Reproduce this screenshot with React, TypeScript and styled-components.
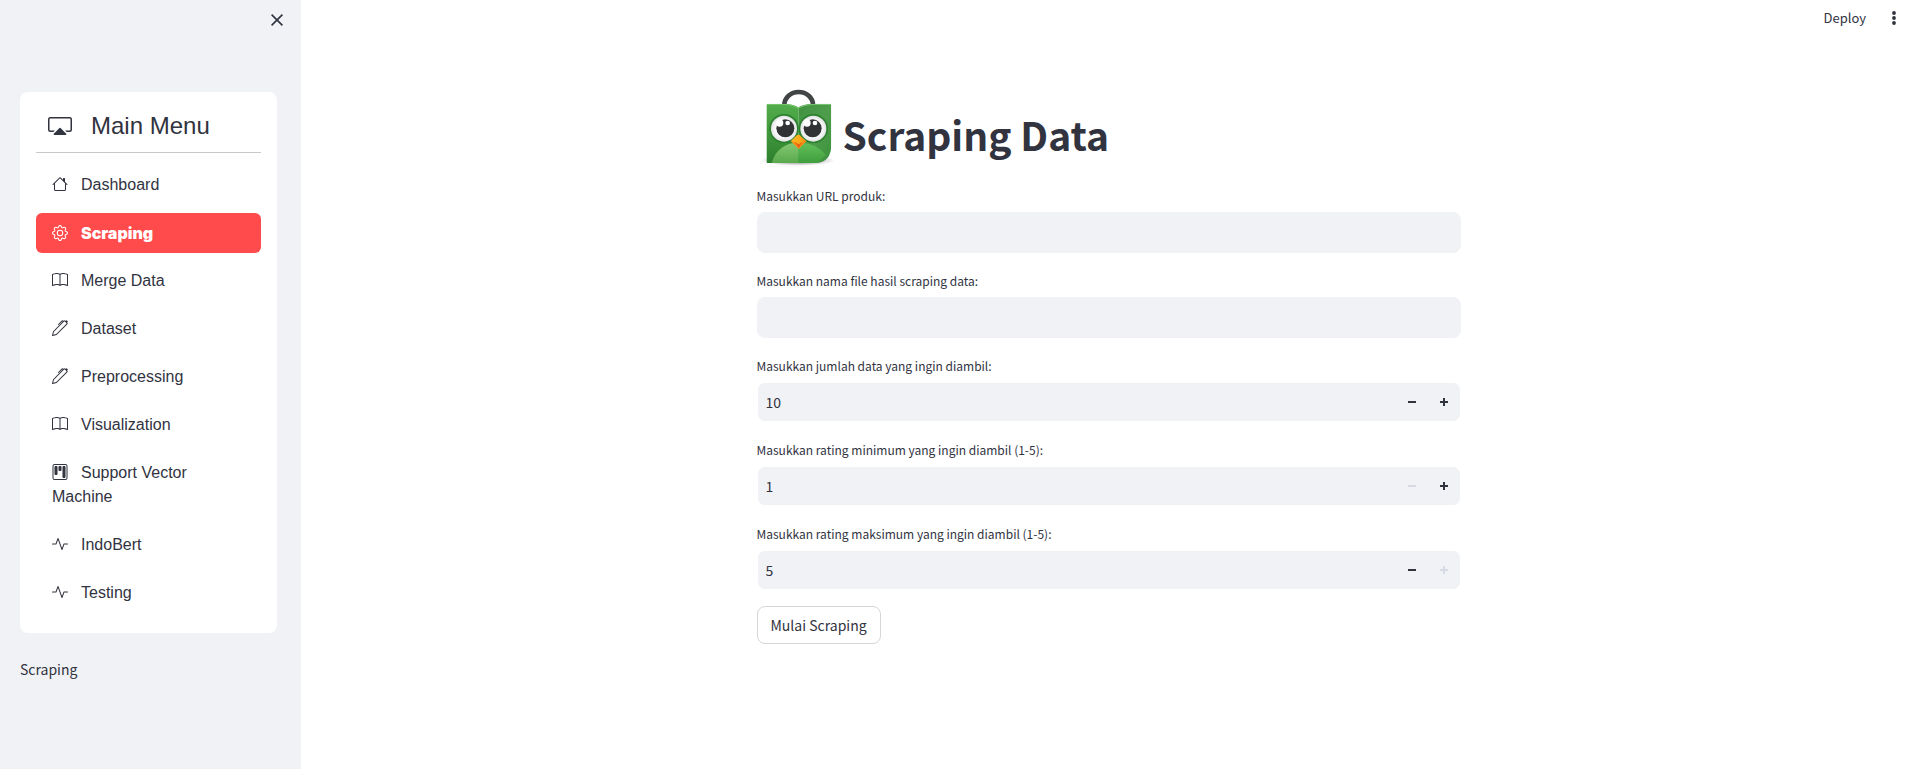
import React, { useState } from "react";
import styled, { createGlobalStyle, css } from "styled-components";
import type { IconType } from "react-icons";
import {
  BsActivity,
  BsBook,
  BsCast,
  BsGear,
  BsHouse,
  BsKanban,
  BsPen,
} from "react-icons/bs";

const bodyFont = `"Source Sans Pro", "Noto Sans CJK SC", sans-serif`;
const menuFont = `"Liberation Sans", Arial, sans-serif`;
const ink = "#31333f";
const panel = "#f0f2f6";
const accent = "#ff4b4b";

const GlobalStyle = createGlobalStyle`
  *, *::before, *::after { box-sizing: border-box; }
  body {
    margin: 0;
    background: #fff;
    color: ${ink};
    font-family: ${bodyFont};
    font-size: 14px;
    line-height: 24px;
  }
  button, input { font: inherit; color: inherit; }
`;

const Page = styled.div`
  display: flex;
  min-height: 100vh;
`;

const Sidebar = styled.aside`
  flex: 0 0 301px;
  padding: 8px 24px 24px 20px;
  background: ${panel};
`;

const SidebarTop = styled.div`
  display: flex;
  justify-content: flex-end;
  height: 84px;
  margin-right: -6px;
`;

const IconButton = styled.button`
  display: flex;
  align-items: center;
  justify-content: center;
  height: 24px;
  padding: 0;
  border: 0;
  background: none;
  cursor: pointer;
`;

const MenuCard = styled.nav`
  padding: 16px;
  border-radius: 8px;
  background: #fff;
  font-family: ${menuFont};
  font-size: 16px;
`;

const MenuTitle = styled.h2`
  display: flex;
  align-items: center;
  gap: 19px;
  margin: 0 0 8px;
  padding: 0 12px 9px;
  height: 45px;
  border-bottom: 1px solid #c9c9cb;
  font-size: 24px;
  font-weight: 400;
  line-height: 36px;
`;

const MenuList = styled.ul`
  margin: 0;
  padding: 0;
  list-style: none;
`;

const MenuEntry = styled.li`
  padding: 4px 0;
`;

const MenuLink = styled.a<{ $active?: boolean }>`
  display: block;
  padding: 8px 16px;
  border-radius: 6px;
  color: inherit;
  text-decoration: none;

  svg {
    margin-right: 13px;
    vertical-align: -2px;
  }

  ${({ $active }) =>
    $active &&
    css`
      background: ${accent};
      color: #fff;
      font-family: "Arial Black", Inter, sans-serif;
      font-weight: 900;
    `}
`;

const SidebarText = styled.p`
  margin: 24px 0 0;
`;

const Main = styled.main`
  flex: 1;
  min-width: 0;
`;

const Toolbar = styled.header`
  display: flex;
  justify-content: flex-end;
  gap: 24px;
  padding: 6px 18px 0 0;
  height: 84px;
`;

const DeployButton = styled(IconButton)`
  font-size: 13px;
`;

const Content = styled.form`
  display: flex;
  flex-direction: column;
  align-items: stretch;
  gap: 16px;
  max-width: 736px;
  margin: 0 auto;
  padding: 0 16px 48px;
`;

const Heading = styled.h1`
  display: flex;
  align-items: center;
  margin: 0;
  height: 84px;
  font-size: 39px;
  font-weight: 700;
  line-height: 48px;

  span {
    padding-top: 16px;
  }
`;

const Field = styled.div`
  display: flex;
  flex-direction: column;
  gap: 4px;
`;

const Label = styled.label`
  font-size: 12px;
  line-height: 24px;
`;

const TextInput = styled.input`
  width: 100%;
  height: 41px;
  padding: 0 8px;
  border: 1px solid ${panel};
  border-radius: 8px;
  background: ${panel};
  outline: none;

  &:focus {
    border-color: ${accent};
  }
`;

const NumberBox = styled.div`
  display: flex;
  height: 40px;
  overflow: hidden;
  border: 1px solid #fff;
  border-radius: 8px;
  background: ${panel};

  &:focus-within {
    border-color: ${accent};
  }
`;

const NumberInput = styled.input`
  flex: 1;
  min-width: 0;
  padding: 0 8px;
  border: 0;
  background: transparent;
  outline: none;
  appearance: textfield;

  &::-webkit-inner-spin-button {
    display: none;
  }
`;

const StepButton = styled.button`
  display: flex;
  align-items: center;
  justify-content: center;
  width: 32px;
  padding: 0;
  border: 0;
  background: transparent;
  cursor: pointer;

  &:disabled {
    color: #d7dae5;
    cursor: not-allowed;
  }
`;

const SubmitButton = styled.button`
  align-self: flex-start;
  height: 38px;
  padding: 0 13px;
  border: 1px solid #d6d6d9;
  border-radius: 8px;
  background: #fff;
  cursor: pointer;
`;

const menu: { label: string; icon: IconType }[] = [
  { label: "Dashboard", icon: BsHouse },
  { label: "Scraping", icon: BsGear },
  { label: "Merge Data", icon: BsBook },
  { label: "Dataset", icon: BsPen },
  { label: "Preprocessing", icon: BsPen },
  { label: "Visualization", icon: BsBook },
  { label: "Support Vector Machine", icon: BsKanban },
  { label: "IndoBert", icon: BsActivity },
  { label: "Testing", icon: BsActivity },
];

function OwlBag() {
  return (
    <svg width="86" height="84" viewBox="6 12 258 252" aria-hidden="true">
      <defs>
        <linearGradient id="bagLeft" x1="0" y1="0" x2="0" y2="1">
          <stop offset="0" stopColor="#53ae4b" />
          <stop offset="1" stopColor="#2c7f2c" />
        </linearGradient>
        <linearGradient id="bagRight" x1="0" y1="0" x2="1" y2="1">
          <stop offset="0" stopColor="#3f9140" />
          <stop offset="0.5" stopColor="#4e9d4c" />
          <stop offset="1" stopColor="#3b923b" />
        </linearGradient>
        <linearGradient id="belly" x1="0" y1="0" x2="0" y2="1">
          <stop offset="0" stopColor="#86c873" />
          <stop offset="1" stopColor="#58a94b" />
        </linearGradient>
        <linearGradient id="bellyRight" x1="0" y1="0" x2="0" y2="1">
          <stop offset="0" stopColor="#62c059" />
          <stop offset="1" stopColor="#3f9e3d" />
        </linearGradient>
        <radialGradient id="eye">
          <stop offset="0.6" stopColor="#fff" />
          <stop offset="1" stopColor="#e3e3e5" />
        </radialGradient>
        <linearGradient id="beak" x1="0" y1="0" x2="1" y2="0">
          <stop offset="0" stopColor="#fbb829" />
          <stop offset="0.5" stopColor="#ffae18" />
          <stop offset="1" stopColor="#f18a1c" />
        </linearGradient>
        <radialGradient id="shadow">
          <stop offset="0.5" stopColor="#777" stopOpacity="0.55" />
          <stop offset="1" stopColor="#999" stopOpacity="0" />
        </radialGradient>
        <clipPath id="bagShape">
          <path d="M34 75q0-4 4-4h48q28 0 44 11q18-11 46-11h49q4 0 4 4v118q0 56-48 56H38q-4 0-4-4z" />
        </clipPath>
      </defs>
      <ellipse cx="128" cy="241" rx="112" ry="17" fill="url(#shadow)" />
      <path d="M88 82v-7a43 39 0 0 1 86 0v7" fill="none" stroke="#424545" strokeWidth="14" />
      <g clipPath="url(#bagShape)">
        <path d="M34 70h97v180H34z" fill="url(#bagLeft)" />
        <path d="M131 70h99v180h-99z" fill="url(#bagRight)" />
        <path d="M50 250c10-40 40-62 80-62v62z" fill="url(#belly)" />
        <path d="M130 188c38 0 66 14 82 38l-30 24h-52z" fill="url(#bellyRight)" />
        <path d="M36 73h50q28 0 44 11q18-11 46-11h52" fill="none" stroke="#7cc971" strokeWidth="3" />
      </g>
      <circle cx="87" cy="146" r="44" fill="#2c812f" />
      <circle cx="175" cy="146" r="44" fill="#2c812f" />
      <circle cx="87" cy="146" r="39" fill="url(#eye)" />
      <circle cx="175" cy="146" r="39" fill="url(#eye)" />
      <circle cx="91" cy="145" r="27" fill="#303234" />
      <circle cx="173" cy="145" r="27" fill="#303234" />
      <circle cx="74" cy="129" r="11" fill="#fff" />
      <circle cx="156" cy="129" r="11" fill="#fff" />
      <circle cx="98" cy="129" r="7" fill="#fff" />
      <circle cx="180" cy="129" r="7" fill="#fff" />
      <path d="M108 184c2-5 11-11 16-17q6-5 12 0c5 6 15 12 18 17q-9 9-23 22q-14-13-23-22z" fill="url(#beak)" />
      <path d="M108 184l14 2l9 8l9-8l14-2q-9 9-23 22q-14-13-23-22z" fill="#f38b13" />
      <path d="M122 186l9 8l9-8l-9 18z" fill="#e9551b" />
    </svg>
  );
}

type NumberFieldProps = {
  id: string;
  label: string;
  initial: number;
  min: number;
  max?: number;
};

function NumberField({ id, label, initial, min, max = Infinity }: NumberFieldProps) {
  const [value, setValue] = useState(initial);
  return (
    <Field>
      <Label htmlFor={id}>{label}</Label>
      <NumberBox>
        <NumberInput
          id={id}
          type="number"
          value={value}
          onChange={(e) => setValue(Number(e.target.value))}
        />
        <StepButton
          type="button"
          aria-label="Kurangi"
          disabled={value <= min}
          onClick={() => setValue(value - 1)}
        >
          <svg width="8" height="8" viewBox="0 0 8 8" fill="currentColor">
            <path d="M0 3h8v2H0z" />
          </svg>
        </StepButton>
        <StepButton
          type="button"
          aria-label="Tambah"
          disabled={value >= max}
          onClick={() => setValue(value + 1)}
        >
          <svg width="8" height="8" viewBox="0 0 8 8" fill="currentColor">
            <path d="M3 0h2v3h3v2H5v3H3V5H0V3h3z" />
          </svg>
        </StepButton>
      </NumberBox>
    </Field>
  );
}

export default function App() {
  const [active, setActive] = useState("Scraping");
  return (
    <>
      <GlobalStyle />
      <Page>
        <Sidebar>
          <SidebarTop>
            <IconButton type="button" aria-label="Tutup">
              <svg width="12" height="12" viewBox="0 0 12 12" fill="none" stroke={ink} strokeWidth="1.6">
                <path d="M.6.6l10.8 10.8M11.4.6L.6 11.4" />
              </svg>
            </IconButton>
          </SidebarTop>
          <MenuCard>
            <MenuTitle>
              <BsCast size={24} />
              Main Menu
            </MenuTitle>
            <MenuList>
              {menu.map(({ label, icon: Icon }) => (
                <MenuEntry key={label}>
                  <MenuLink href="#" $active={label === active} onClick={() => setActive(label)}>
                    <Icon size={16} />
                    {label}
                  </MenuLink>
                </MenuEntry>
              ))}
            </MenuList>
          </MenuCard>
          <SidebarText>{active}</SidebarText>
        </Sidebar>
        <Main>
          <Toolbar>
            <DeployButton type="button">Deploy</DeployButton>
            <IconButton type="button" aria-label="Menu">
              <svg width="8" height="14" viewBox="0 0 8 14" fill={ink}>
                <circle cx="4" cy="2" r="1.9" />
                <circle cx="4" cy="7" r="1.9" />
                <circle cx="4" cy="12" r="1.9" />
              </svg>
            </IconButton>
          </Toolbar>
          <Content onSubmit={(e) => e.preventDefault()}>
            <Heading>
              <OwlBag />
              <span>Scraping Data</span>
            </Heading>
            <Field>
              <Label htmlFor="url">Masukkan URL produk:</Label>
              <TextInput id="url" type="text" />
            </Field>
            <Field>
              <Label htmlFor="file">Masukkan nama file hasil scraping data:</Label>
              <TextInput id="file" type="text" />
            </Field>
            <NumberField id="count" label="Masukkan jumlah data yang ingin diambil:" initial={10} min={1} />
            <NumberField id="rating-min" label="Masukkan rating minimum yang ingin diambil (1-5):" initial={1} min={1} max={5} />
            <NumberField id="rating-max" label="Masukkan rating maksimum yang ingin diambil (1-5):" initial={5} min={1} max={5} />
            <SubmitButton type="submit">Mulai Scraping</SubmitButton>
          </Content>
        </Main>
      </Page>
    </>
  );
}
